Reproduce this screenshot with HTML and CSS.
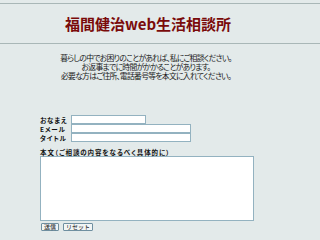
FILE: index.html
```html
<!DOCTYPE html>
<html lang="ja">
<head>
  <meta charset="UTF-8">
  <title>福間健治web生活相談所</title>
  <link rel="stylesheet" href="styles.css">
</head>
<body>
    <div class="page">
        <div class="rule"></div>
        <h1 class="title">福間健治web生活相談所</h1>
        <div class="rule"></div>
        <div class="intro">
            <p>暮らしの中でお困りのことがあれば、私にご相談ください。</p>
            <p>お返事までに時間がかかることがあります。</p>
            <p>必要な方はご住所、電話番号等を本文に入れてください。</p>
        </div>
        <form class="form">
            <div class="row">
                <label>おなまえ</label>
                <input type="text" class="short">
            </div>
            <div class="row">
                <label>Eメール</label>
                <input type="text">
            </div>
            <div class="row">
                <label>タイトル</label>
                <input type="text">
            </div>
            <div class="body-label">本文（ご相談の内容をなるべく具体的に）</div>
            <textarea class="message"></textarea>
            <div class="buttons">
                <button type="button">送信</button>
                <button type="reset">リセット</button>
            </div>
        </form>
    </div>
</body>
</html>
```

FILE: styles.css
```css
body {
    margin: 0;
    background-color: #e3eaea;
    font-family: "Noto Sans CJK JP", "Noto Sans", sans-serif;
    color: #111;
}
.page {
    width: 320px;
    padding-top: 3px;
}
.rule {
    height: 1px;
    background-color: #a9b7b7;
}
.title {
    width: 296px;
    margin: 0;
    height: 39px;
    line-height: 39px;
    text-align: center;
    font-size: 15px;
    font-weight: bold;
    color: #7a0a0a;
    font-feature-settings: "palt";
}
.intro {
    width: 292px;
    margin-top: 10px;
    text-align: center;
    font-family: "Liberation Sans", "Noto Sans CJK JP", sans-serif;
    font-size: 7.8px;
    letter-spacing: -0.7px;
    font-feature-settings: "palt";
    color: #1a1a1a;
}
.intro p {
    margin: 0;
    line-height: 9px;
}
.form {
    margin-top: 34px;
    margin-left: 40px;
}
.row {
    display: flex;
    align-items: center;
    height: 9px;
}
.row label {
    width: 31px;
    font-size: 6.5px;
    font-weight: bold;
    font-feature-settings: "palt";
    letter-spacing: 0.8px;
}
.row input {
    box-sizing: border-box;
    width: 120px;
    height: 9px;
    margin: 0;
    padding: 0;
    border: 1px solid #93b2c0;
    background-color: #fff;
}
.row input.short {
    width: 75px;
}
.body-label {
    margin-top: 6px;
    font-size: 6.5px;
    font-weight: bold;
    line-height: 8px;
    letter-spacing: 0.9px;
    font-feature-settings: "palt";
}
.message {
    display: block;
    box-sizing: border-box;
    width: 214px;
    height: 65px;
    margin: 0;
    padding: 0;
    border: 1px solid #93b2c0;
    background-color: #fff;
    resize: none;
    overflow-y: scroll;
}
.message::-webkit-scrollbar {
    width: 7px;
}
.message::-webkit-scrollbar-track {
    background-color: #fbfdfd;
    border-left: 1px solid #eef3f3;
}
.message::-webkit-scrollbar-button:single-button {
    display: block;
    height: 7px;
    background-color: #e6eeee;
}
.buttons {
    display: flex;
    gap: 4px;
    margin-top: 2px;
    margin-left: 1px;
}
.buttons button {
    height: 8px;
    margin: 0;
    padding: 0 2px;
    border: 1px solid #6f8fa0;
    border-radius: 1px;
    background-color: #f1f5f5;
    font-family: "Noto Sans CJK JP", sans-serif;
    font-size: 6px;
    line-height: 6px;
    color: #111;
}
```
